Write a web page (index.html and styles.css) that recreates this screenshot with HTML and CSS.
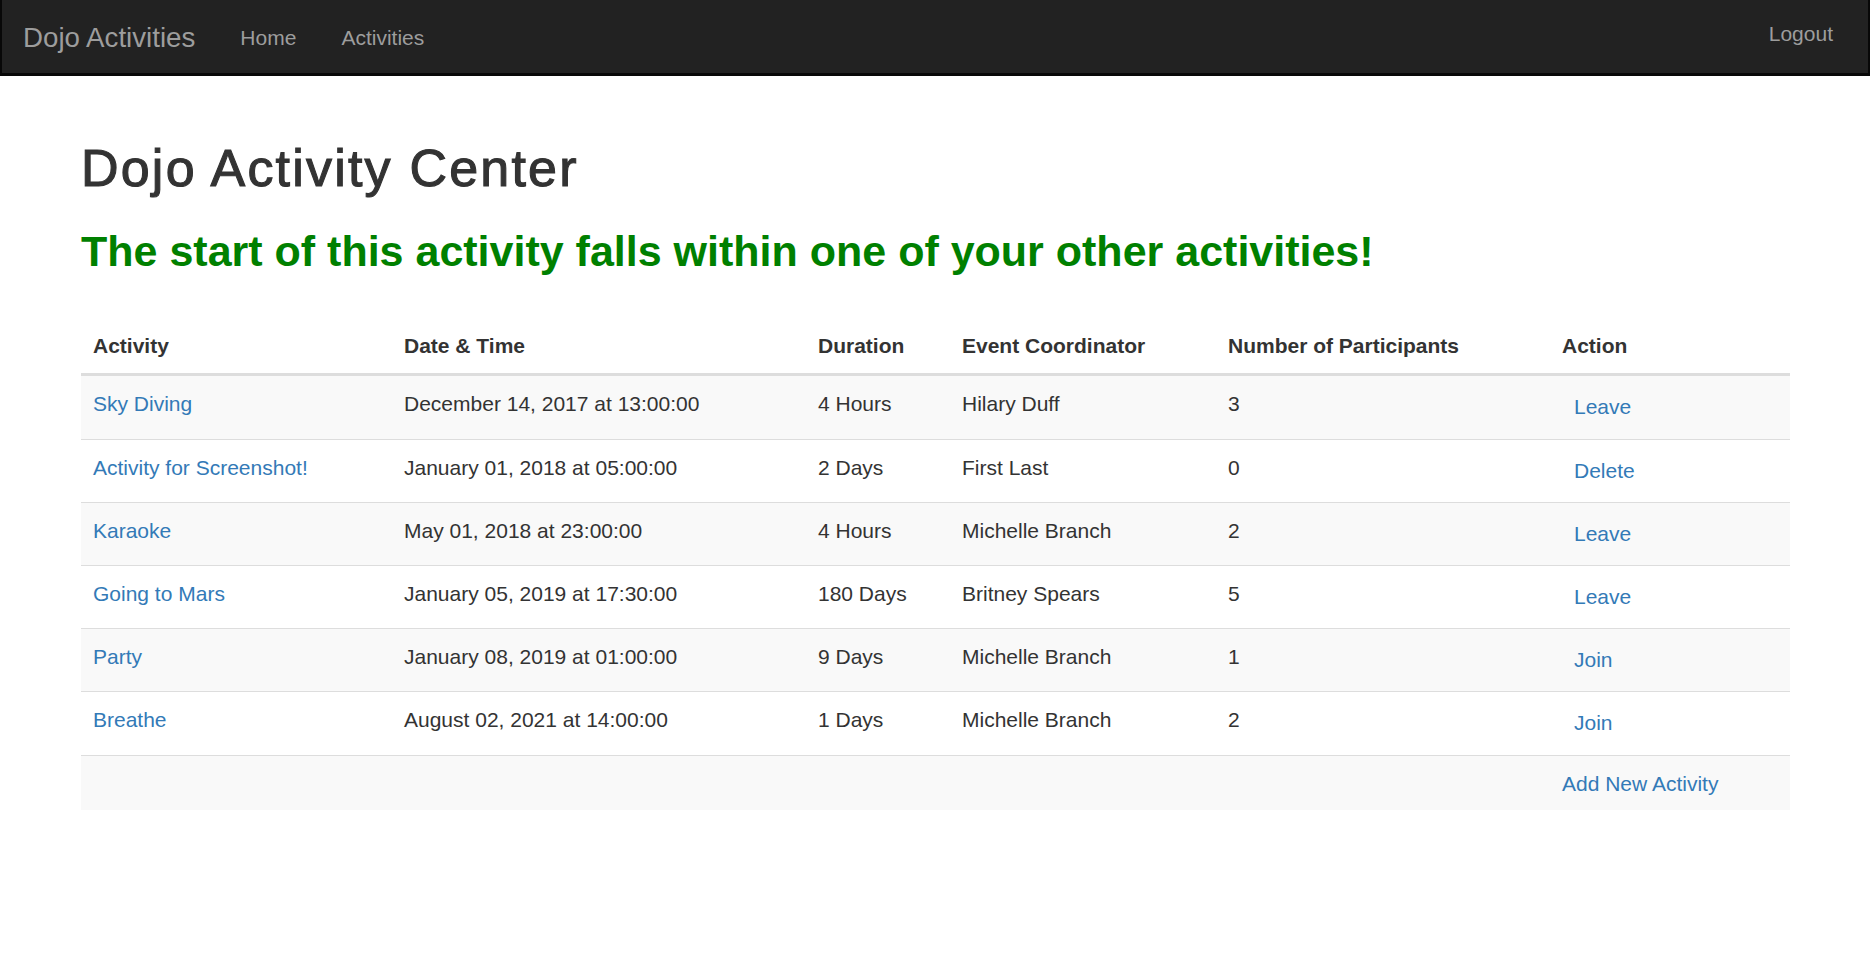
FILE: index.html
```html
<!DOCTYPE html>
<html lang="en">
<head>
<meta charset="utf-8">
<title>Dojo Activities</title>
<link rel="stylesheet" href="styles.css">
</head>
<body>
<nav class="navbar">
  <div class="navbar-left">
    <a class="brand" href="#">Dojo Activities</a>
    <ul class="nav-links">
      <li><a href="#">Home</a></li>
      <li><a href="#">Activities</a></li>
    </ul>
  </div>
  <a class="logout" href="#">Logout</a>
</nav>
<main class="page">
  <h1 class="title">Dojo Activity Center</h1>
  <h2 class="alert-msg">The start of this activity falls within one of your other activities!</h2>
  <table class="activities">
    <colgroup>
      <col class="c-activity">
      <col class="c-date">
      <col class="c-duration">
      <col class="c-coord">
      <col class="c-count">
      <col class="c-action">
    </colgroup>
    <thead>
      <tr>
        <th>Activity</th>
        <th>Date &amp; Time</th>
        <th>Duration</th>
        <th>Event Coordinator</th>
        <th>Number of Participants</th>
        <th>Action</th>
      </tr>
    </thead>
    <tbody>
      <tr>
        <td><a href="#">Sky Diving</a></td>
        <td>December 14, 2017 at 13:00:00</td>
        <td>4 Hours</td>
        <td>Hilary Duff</td>
        <td>3</td>
        <td><a class="action-link" href="#">Leave</a></td>
      </tr>
      <tr>
        <td><a href="#">Activity for Screenshot!</a></td>
        <td>January 01, 2018 at 05:00:00</td>
        <td>2 Days</td>
        <td>First Last</td>
        <td>0</td>
        <td><a class="action-link" href="#">Delete</a></td>
      </tr>
      <tr>
        <td><a href="#">Karaoke</a></td>
        <td>May 01, 2018 at 23:00:00</td>
        <td>4 Hours</td>
        <td>Michelle Branch</td>
        <td>2</td>
        <td><a class="action-link" href="#">Leave</a></td>
      </tr>
      <tr>
        <td><a href="#">Going to Mars</a></td>
        <td>January 05, 2019 at 17:30:00</td>
        <td>180 Days</td>
        <td>Britney Spears</td>
        <td>5</td>
        <td><a class="action-link" href="#">Leave</a></td>
      </tr>
      <tr>
        <td><a href="#">Party</a></td>
        <td>January 08, 2019 at 01:00:00</td>
        <td>9 Days</td>
        <td>Michelle Branch</td>
        <td>1</td>
        <td><a class="action-link" href="#">Join</a></td>
      </tr>
      <tr>
        <td><a href="#">Breathe</a></td>
        <td>August 02, 2021 at 14:00:00</td>
        <td>1 Days</td>
        <td>Michelle Branch</td>
        <td>2</td>
        <td><a class="action-link" href="#">Join</a></td>
      </tr>
      <tr class="row-add">
        <td colspan="5"></td>
        <td><a href="#">Add New Activity</a></td>
      </tr>
    </tbody>
  </table>
</main>
</body>
</html>
```

FILE: styles.css
```css
* {
  box-sizing: border-box;
}

body {
  margin: 0;
  font-family: "Liberation Sans", Arial, Helvetica, sans-serif;
  font-size: 21px;
  line-height: 28px;
  color: #333;
  background: #fff;
}

a {
  color: #337ab7;
  text-decoration: none;
}

/* ---------- navbar ---------- */
.navbar {
  display: flex;
  justify-content: space-between;
  align-items: flex-start;
  height: 76px;
  padding: 23px 35px 0 21px;
  background: #222;
  border-style: solid;
  border-color: #080808;
  border-width: 0 2px 3px 2px;
}

.navbar-left {
  display: flex;
  align-items: flex-start;
  gap: 45px;
}

.brand {
  margin-top: 1px;
  font-size: 27.7px;
  line-height: 1;
  color: #9d9d9d;
}

.nav-links {
  display: flex;
  gap: 45px;
  list-style: none;
  margin: 0;
  padding: 4px 0 0;
  line-height: 1;
}

.nav-links a,
.logout {
  font-size: 21px;
  line-height: 1;
  color: #9d9d9d;
}

/* ---------- page ---------- */
.page {
  padding: 64px 80px 0 81px;
}

.title {
  margin: 0;
  font-size: 52px;
  line-height: 1.1;
  font-weight: normal;
  letter-spacing: 2.2px;
  -webkit-text-stroke: 1.1px #333;
  color: #333;
}

.alert-msg {
  margin: 30.5px 0 46.5px;
  font-size: 43px;
  line-height: 1.1;
  font-weight: bold;
  color: #008000;
}

/* ---------- table ---------- */
.activities {
  width: 100%;
  table-layout: fixed;
  border-collapse: separate;
  border-spacing: 0;
}

.c-activity { width: 311px; }
.c-date { width: 414px; }
.c-duration { width: 144px; }
.c-coord { width: 266px; }
.c-count { width: 334px; }
.c-action { width: 240px; }

.activities th {
  text-align: left;
  font-weight: bold;
  vertical-align: bottom;
  padding: 11px 11px 13px 12px;
  border-bottom: 3px solid #ddd;
}

.activities td {
  vertical-align: top;
  padding: 14px 11px 11.2px 12px;
  white-space: nowrap;
}

.activities tbody tr + tr td {
  border-top: 1px solid #ddd;
}

.activities tbody tr:nth-child(odd) td {
  background: #f9f9f9;
}

.action-link {
  display: inline-block;
  padding: 3px 0 6px 12px;
}

.activities .row-add td {
  padding: 14px 11px 12px 12px;
}
```
